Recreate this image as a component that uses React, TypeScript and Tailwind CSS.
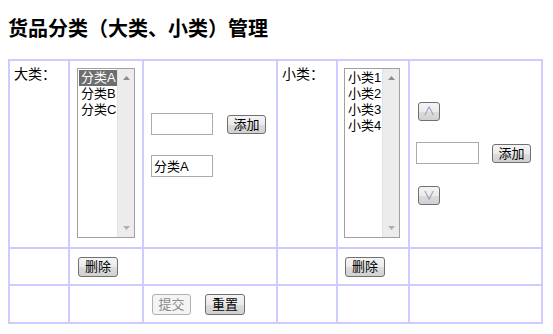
import React from "react";

const FONT = { fontFamily: '"Liberation Sans", "Noto Sans CJK SC", sans-serif' };

function Btn({
  children,
  w,
  h = 19,
  disabled = false,
  glyph = false,
}: {
  children: React.ReactNode;
  w: number;
  h?: number;
  disabled?: boolean;
  glyph?: boolean;
}) {
  const base = disabled
    ? "border border-[#adb2b5] bg-[#f4f4f4] text-[#8a8a8a]"
    : "border border-[#707070] bg-[linear-gradient(#f4f4f4_0%,#ebebeb_50%,#dddddd_51%,#d0d0d0_100%)]";
  return (
    <div
      className={`${base} rounded-[3px] flex items-center justify-center leading-none shrink-0 ${
        glyph ? "text-[12px] text-[#7f93b0]" : disabled ? "text-[13px]" : "text-[13px] text-black"
      }`}
      style={{ width: w, height: h }}
    >
      {children}
    </div>
  );
}

function TextInput({ w, h, value }: { w: number; h: number; value?: string }) {
  return (
    <div
      className="border border-[#acacac] bg-white text-[13px] leading-none flex items-center pl-[2px] text-black shrink-0 whitespace-nowrap"
      style={{ width: w, height: h }}
    >
      {value}
    </div>
  );
}

function ListBox({ w, items, selected }: { w: number; items: string[]; selected?: number }) {
  return (
    <div
      className="border border-[#a0a0a0] bg-white flex h-[170px]"
      style={{ width: w }}
    >
      <div className="flex-1 min-w-0 pt-[1px] pl-[1px] overflow-hidden">
        {items.map((it, i) => (
          <div
            key={it}
            className={`h-[16px] text-[13px] leading-[16px] pl-[2px] whitespace-nowrap overflow-hidden ${
              i === selected ? "bg-[#6e6e6e] text-white" : "text-black"
            }`}
          >
            {it}
          </div>
        ))}
      </div>
      <div className="w-[17px] shrink-0 bg-[#ececec] border-l border-[#e2e2e2] flex flex-col justify-between items-center py-[7px]">
        <svg width="7" height="4" viewBox="0 0 7 4">
          <polygon points="3.5,0 7,4 0,4" fill="#8c8c8c" />
        </svg>
        <svg width="7" height="4" viewBox="0 0 7 4">
          <polygon points="0,0 7,0 3.5,4" fill="#b0b0b0" />
        </svg>
      </div>
    </div>
  );
}

function Cell({ children, className = "" }: { children?: React.ReactNode; className?: string }) {
  return <div className={`bg-white ${className}`}>{children}</div>;
}

export default function App() {
  return (
    <div className="bg-white w-[553px] h-[334px] text-black" style={FONT}>
      <div className="pl-[8px] pt-[19px] text-[20px] font-bold leading-[20px]">
        货品分类（大类、小类）管理
      </div>
      <div className="ml-[8px] mt-[20px] w-[535px] grid grid-cols-[58px_72px_132px_58px_70px_131px] grid-rows-[186px_35px_36px] gap-[2px] p-[2px] bg-[#ccccff]">
        {/* row 1 */}
        <Cell className="pl-[4px] pt-[5px] text-[14px] leading-[16px]">大类：</Cell>
        <Cell className="pl-[7px] pt-[7px]">
          <ListBox w={58} items={["分类A", "分类B", "分类C"]} selected={0} />
        </Cell>
        <Cell className="pl-[7px] pt-[52px] flex flex-col gap-[20px]">
          <div className="flex items-center gap-[14px]">
            <TextInput w={62} h={22} />
            <Btn w={39}>添加</Btn>
          </div>
          <TextInput w={62} h={22} value="分类A" />
        </Cell>
        <Cell className="pl-[4px] pt-[5px] text-[14px] leading-[16px]">小类：</Cell>
        <Cell className="pl-[6px] pt-[7px]">
          <ListBox w={56} items={["小类1", "小类2", "小类3", "小类4"]} />
        </Cell>
        <Cell className="pl-[6px] pt-[41px] flex flex-col">
          <div className="pl-[2px]">
            <Btn w={22} glyph>
              ∧
            </Btn>
          </div>
          <div className="flex items-center gap-[13px] mt-[21px]">
            <TextInput w={63} h={22} />
            <Btn w={39}>添加</Btn>
          </div>
          <div className="pl-[2px] mt-[22px]">
            <Btn w={22} glyph>
              ∨
            </Btn>
          </div>
        </Cell>
        {/* row 2 */}
        <Cell />
        <Cell className="pl-[8px] flex items-center">
          <Btn w={40} h={20}>删除</Btn>
        </Cell>
        <Cell />
        <Cell />
        <Cell className="pl-[7px] flex items-center">
          <Btn w={40} h={20}>删除</Btn>
        </Cell>
        <Cell />
        {/* row 3 */}
        <Cell />
        <Cell />
        <Cell className="pl-[8px] flex items-center gap-[14px]">
          <Btn w={39} h={21} disabled>
            提交
          </Btn>
          <Btn w={40} h={21}>重置</Btn>
        </Cell>
        <Cell />
        <Cell />
        <Cell />
      </div>
    </div>
  );
}
